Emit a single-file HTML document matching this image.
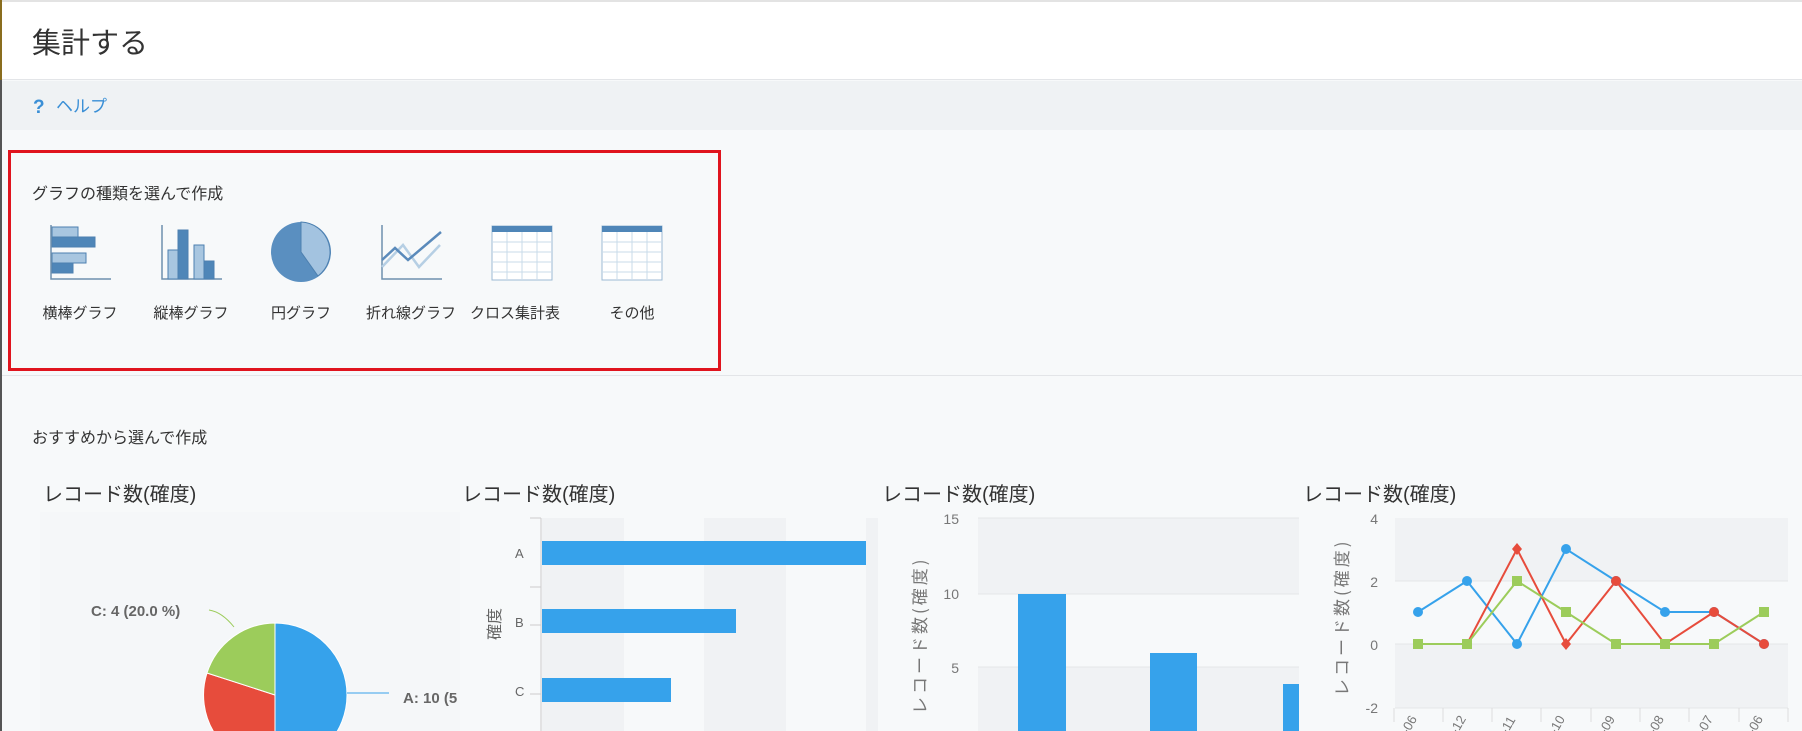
<!DOCTYPE html>
<html><head><meta charset="utf-8"><style>
*{margin:0;padding:0;box-sizing:border-box}
body{width:1802px;height:731px;overflow:hidden;background:#f7f9fa;font-family:"Liberation Sans","Noto Sans CJK JP",sans-serif;color:#333;position:relative}
.a{position:absolute;white-space:nowrap}
</style></head><body>
<div class="a" style="left:0;top:0;width:1802px;height:80px;background:#fff;border-top:2px solid #e3e3e3;border-bottom:1px solid #e3e5e8"></div>
<div class="a" style="left:0;top:0;width:2px;height:80px;background:#8a6d1e"></div>
<div class="a" style="left:0;top:80px;width:2px;height:651px;background:#555"></div>
<div class="a" style="left:32px;top:20px;font-size:29px;color:#333">集計する</div>
<div class="a" style="left:2px;top:81px;width:1800px;height:49px;background:#eff2f4"></div>
<div class="a" style="left:33px;top:98px;font-size:19px;line-height:20px;font-weight:bold;color:#3a8fd6">?</div>
<div class="a" style="left:56px;top:92px;font-size:17px;color:#3a8fd6">ヘルプ</div>
<div class="a" style="left:8px;top:150px;width:713px;height:221px;border:3px solid #e0141e"></div>
<div class="a" style="left:32px;top:180px;font-size:16px">グラフの種類を選んで作成</div>
<div class="a" style="left:2px;top:375px;width:1800px;height:1px;background:#e3e5e8"></div>
<div class="a" style="left:32px;top:424px;font-size:16px">おすすめから選んで作成</div>
<div class="a" style="left:43px;top:478px;font-size:20px">レコード数(確度)</div>
<div class="a" style="left:462px;top:478px;font-size:20px">レコード数(確度)</div>
<div class="a" style="left:882px;top:478px;font-size:20px">レコード数(確度)</div>
<div class="a" style="left:1303px;top:478px;font-size:20px">レコード数(確度)</div>
<div class="a" style="left:40px;top:302px;width:640px;font-size:15px;color:#333">
<span class="a" style="left:0;width:80px;text-align:center">横棒グラフ</span>
<span class="a" style="left:111px;width:80px;text-align:center">縦棒グラフ</span>
<span class="a" style="left:221px;width:80px;text-align:center">円グラフ</span>
<span class="a" style="left:321px;width:100px;text-align:center">折れ線グラフ</span>
<span class="a" style="left:425px;width:100px;text-align:center">クロス集計表</span>
<span class="a" style="left:552px;width:80px;text-align:center">その他</span>
</div>
<svg class="a" style="left:0;top:0" width="1802" height="731">
<g fill="#7fa9cd" stroke="#4d80b0" stroke-width="1">
<rect x="52" y="227" width="26" height="10" fill="#a8c6e0"/><rect x="52" y="237" width="43" height="10" fill="#4f86b8"/><rect x="52" y="253" width="34" height="10" fill="#a8c6e0"/><rect x="52" y="263" width="21" height="10" fill="#4f86b8"/></g>
<path d="M51 225V279H111" stroke="#6f8fae" fill="none" stroke-width="1.5"/>
<path d="M162 225V279H222" stroke="#6f8fae" fill="none" stroke-width="1.5"/>
<g stroke="#4d80b0"><rect x="168" y="250" width="10" height="29" fill="#a8c6e0"/><rect x="178" y="230" width="10" height="49" fill="#4f86b8"/><rect x="194" y="245" width="10" height="34" fill="#a8c6e0"/><rect x="204" y="261" width="10" height="18" fill="#4f86b8"/></g>
<ellipse cx="301" cy="252" rx="30" ry="30" fill="#5a8fc0"/>
<path d="M301 252V222A30 30 0 0 1 318 276Z" fill="#a3c3e0" stroke="#4d80b0"/>
<path d="M382 225V279H442" stroke="#6f8fae" fill="none" stroke-width="1.5"/>
<path d="M382 267L403 245L419 267L440 245" stroke="#b6cfe4" stroke-width="2.5" fill="none"/>
<path d="M382 260L395 248L408 260L441 232" stroke="#5a8abb" stroke-width="2.5" fill="none"/>
<g id="t"><rect x="492" y="226" width="60" height="54" fill="#fff" stroke="#9dbad4"/><rect x="492" y="226" width="60" height="6" fill="#4f86b8"/>
<g stroke="#c9dbea"><path d="M492 242H552M492 252H552M492 262H552M492 272H552M507 232V280M522 232V280M537 232V280"/></g></g>
<use href="#t" x="110"/>
<rect x="40" y="512" width="420" height="219" fill="#f5f7f9"/>
<path d="M275 695V623A72 72 0 0 1 275 767Z" fill="#36a2eb" stroke="#fff"/>
<path d="M275 695L275 767A72 72 0 0 1 207 673Z" fill="#e74c3c" stroke="#fff"/>
<path d="M275 695L207 673A72 72 0 0 1 275 623Z" fill="#9ccc5b" stroke="#fff"/>
<path d="M234 627Q222 612 209 610" stroke="#9ccc5b" fill="none"/>
<path d="M347 693H389" stroke="#36a2eb"/>
<text x="91" y="616" font-size="15" font-weight="bold" fill="#666" font-family="Liberation Sans">C: 4 (20.0 %)</text>
<text x="403" y="703" font-size="15" font-weight="bold" fill="#666" font-family="Liberation Sans">A: 10 (5</text>
<rect x="542" y="518" width="82" height="213" fill="#f0f2f4"/><rect x="704" y="518" width="82" height="213" fill="#f0f2f4"/>
<rect x="786" y="518" width="82" height="213" fill="#f7f9fa"/>
<path d="M541 518V731M530 518H541M530 625H541M530 694H541M530 587H541" stroke="#ccc"/>
<rect x="542" y="541" width="324" height="24" fill="#36a2eb"/>
<rect x="542" y="609" width="194" height="24" fill="#36a2eb"/>
<rect x="542" y="678" width="129" height="24" fill="#36a2eb"/>
<g font-size="13" fill="#666" font-family="Liberation Sans"><text x="515" y="558">A</text><text x="515" y="627">B</text><text x="515" y="696">C</text></g>
<text transform="translate(500,640) rotate(-90)" font-size="16" fill="#666" font-family="Noto Sans CJK JP">確度</text>
<rect x="866" y="518" width="12" height="213" fill="#f0f2f4"/>
<rect x="978" y="518" width="321" height="76" fill="#f0f2f4"/><rect x="978" y="667" width="321" height="64" fill="#f0f2f4"/>
<path d="M978 518H1299M978 594H1299M978 667H1299" stroke="#e4e6e8"/>
<rect x="1018" y="594" width="48" height="137" fill="#36a2eb"/>
<rect x="1150" y="653" width="47" height="78" fill="#36a2eb"/>
<rect x="1283" y="684" width="16" height="47" fill="#36a2eb"/>
<g font-size="14" fill="#777" font-family="Liberation Sans" text-anchor="end"><text x="959" y="524">15</text><text x="959" y="599">10</text><text x="959" y="673">5</text></g>
<text transform="translate(926,714) rotate(-90)" font-size="17" letter-spacing="3" fill="#777" font-family="Noto Sans CJK JP">レコード数(確度)</text>
<rect x="1395" y="518" width="393" height="63" fill="#f0f2f4"/><rect x="1395" y="644" width="393" height="64" fill="#f0f2f4"/>
<path d="M1395 581H1788M1395 644H1788M1395 708H1788" stroke="#e4e6e8"/>
<path d="M1394 708V722M1443 708V722M1492 708V722M1541 708V722M1591 708V722M1640 708V722M1689 708V722M1739 708V722M1788 708V722" stroke="#ddd"/>
<g font-size="14" fill="#777" font-family="Liberation Sans" text-anchor="end"><text x="1378" y="524">4</text><text x="1378" y="587">2</text><text x="1378" y="650">0</text><text x="1378" y="713">-2</text></g>
<text transform="translate(1348,696) rotate(-90)" font-size="17" letter-spacing="3" fill="#777" font-family="Noto Sans CJK JP">レコード数(確度)</text>
<polyline points="1418,612 1467,581 1517,644 1566,549 1616,581 1665,612 1714,612 1764,644" fill="none" stroke="#36a2eb" stroke-width="2"/>
<polyline points="1418,644 1467,644 1517,549 1566,644 1616,581 1665,644 1714,612 1764,644" fill="none" stroke="#e74c3c" stroke-width="2"/>
<polyline points="1418,644 1467,644 1517,581 1566,612 1616,644 1665,644 1714,644 1764,612" fill="none" stroke="#9ccc5b" stroke-width="2"/>
<g fill="#36a2eb"><circle cx="1418" cy="612" r="5"/><circle cx="1467" cy="581" r="5"/><circle cx="1517" cy="644" r="5"/><circle cx="1566" cy="549" r="5"/><circle cx="1616" cy="581" r="5"/><circle cx="1665" cy="612" r="5"/><circle cx="1714" cy="612" r="5"/><circle cx="1764" cy="644" r="5"/></g>
<g fill="#e74c3c"><path d="M1517 543l5 6-5 6-5-6z"/><path d="M1566 638l5 6-5 6-5-6z"/><circle cx="1616" cy="581" r="5"/><circle cx="1714" cy="612" r="5"/><circle cx="1764" cy="644" r="5"/></g>
<g fill="#9ccc5b"><rect x="1413" y="639" width="10" height="10"/><rect x="1462" y="639" width="10" height="10"/><rect x="1512" y="576" width="10" height="10"/><rect x="1561" y="607" width="10" height="10"/><rect x="1611" y="639" width="10" height="10"/><rect x="1660" y="639" width="10" height="10"/><rect x="1709" y="639" width="10" height="10"/><rect x="1759" y="607" width="10" height="10"/></g>
<g font-size="13" fill="#777" font-family="Liberation Sans">
<text transform="translate(1408,735) rotate(-60)">-06</text><text transform="translate(1457,735) rotate(-60)">-12</text><text transform="translate(1507,735) rotate(-60)">-11</text><text transform="translate(1556,735) rotate(-60)">-10</text><text transform="translate(1606,735) rotate(-60)">-09</text><text transform="translate(1655,735) rotate(-60)">-08</text><text transform="translate(1704,735) rotate(-60)">-07</text><text transform="translate(1754,735) rotate(-60)">-06</text></g>
</svg>
</body></html>
